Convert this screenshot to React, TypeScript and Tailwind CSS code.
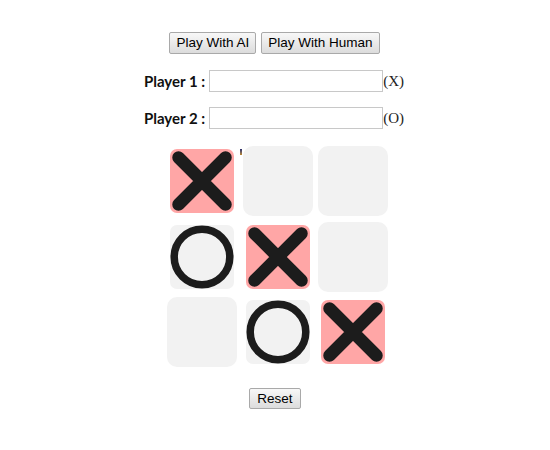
import React from 'react';

type Mark = 'X' | 'O' | null;

const board: Mark[] = ['X', null, null, 'O', 'X', null, null, 'O', 'X'];

const XMark = () => (
  <svg width="64" height="64" viewBox="0 0 64 64">
    <rect x="0" y="0" width="64" height="64" rx="7" fill="#ffa6a6" />
    <path d="M8.5 8.5 L55.5 55.5 M55.5 8.5 L8.5 55.5" stroke="#1c1c1c" strokeWidth="12.5" strokeLinecap="round" />
  </svg>
);

const OMark = () => (
  <svg width="64" height="64" viewBox="0 0 64 64">
    <rect x="0" y="0" width="64" height="64" rx="7" fill="#f2f2f2" />
    <circle cx="32" cy="32" r="27.8" fill="none" stroke="#1c1c1c" strokeWidth="7.5" />
  </svg>
);

const OldButton = ({ label }: { label: string }) => (
  <button className="h-[22px] px-[6px] border border-[#a9a9a9] rounded-[2px] bg-gradient-to-b from-[#f8f8f8] to-[#dcdcdc] text-[13.5px] text-black font-['Liberation_Sans',Arial,sans-serif] leading-none">
    {label}
  </button>
);

const PlayerRow = ({ n, sign }: { n: number; sign: string }) => (
  <div className="flex items-center justify-center h-[22px] -ml-[2px]">
    <span className="font-['Lato',sans-serif] font-bold text-[15px] text-[#111] mr-[4px]">Player {n} :</span>
    <input className="w-[174px] h-[22px] border border-[#c8c8c8] bg-white outline-none" />
    <span className="font-['Liberation_Serif',serif] text-[15px] text-[#222]">({sign})</span>
  </div>
);

export default function App() {
  return (
    <div className="w-[550px] h-[450px] bg-white flex flex-col items-center pt-[32px]">
      <div className="flex gap-[5px] mr-[1px]">
        <OldButton label="Play With AI" />
        <OldButton label="Play With Human" />
      </div>
      <div className="mt-[16px] flex flex-col gap-[15px]">
        <PlayerRow n={1} sign="X" />
        <PlayerRow n={2} sign="O" />
      </div>
      <div className="relative mt-[17px] ml-[5px] grid grid-cols-[70px_70px_70px] gap-x-[5.5px] gap-y-[5.5px]">
        {board.map((m, i) => (
          <div
            key={i}
            className={`w-[70px] h-[70px] rounded-[10px] flex items-center justify-center ${m ? '' : 'bg-[#f2f2f2]'}`}
          >
            {m === 'X' && <XMark />}
            {m === 'O' && <OMark />}
          </div>
        ))}
        <span className="absolute left-[73px] top-[3px] w-[2px] h-[6px] bg-gradient-to-b from-[#2b2b6a] to-[#c08a20]" />
      </div>
      <div className="mt-[18px]">
        <button className="h-[21px] px-[7px] border border-[#a9a9a9] rounded-[2px] bg-gradient-to-b from-[#f8f8f8] to-[#dcdcdc] text-[13.5px] text-black font-['Liberation_Sans',Arial,sans-serif] leading-none">
          Reset
        </button>
      </div>
    </div>
  );
}
